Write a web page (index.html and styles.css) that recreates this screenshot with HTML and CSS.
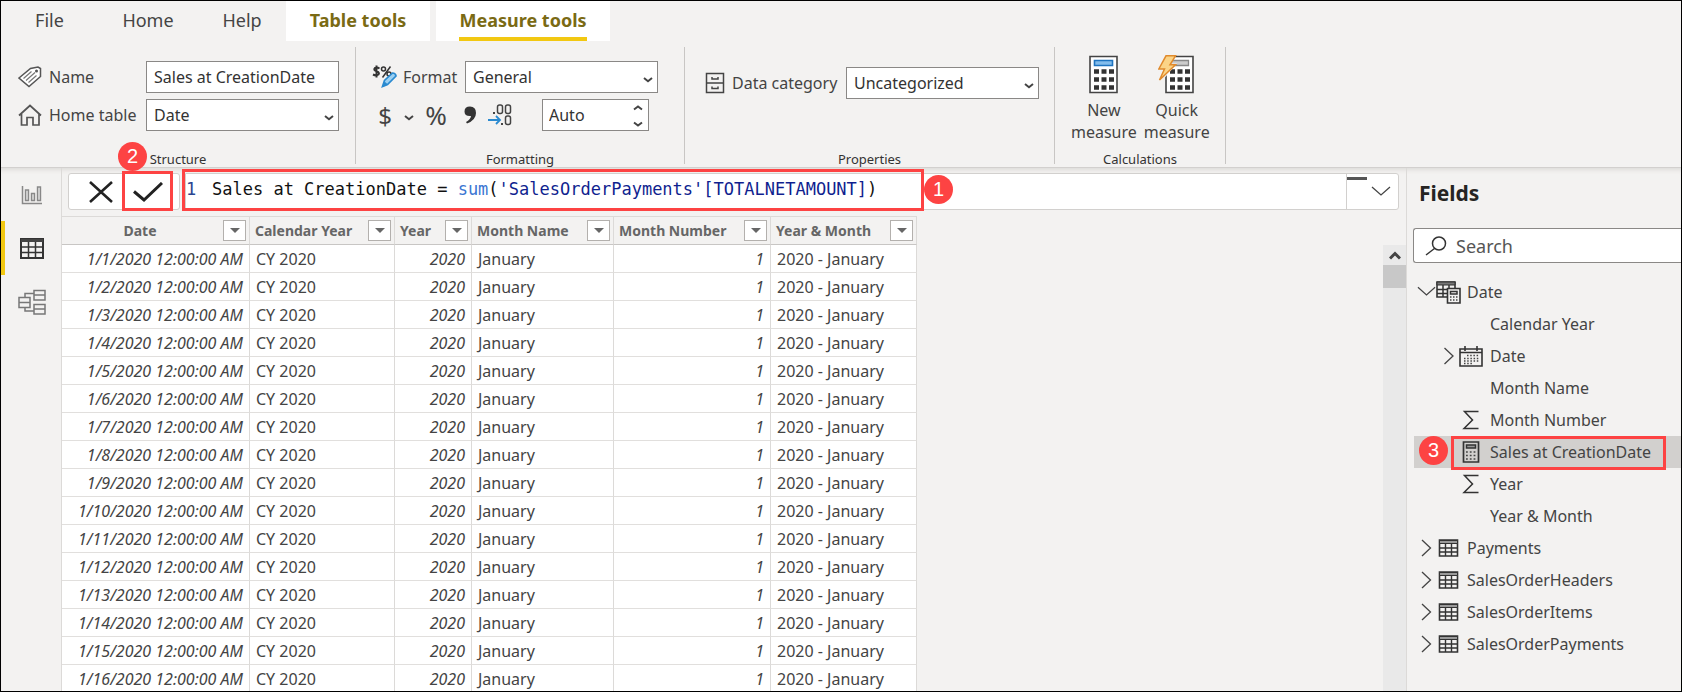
FILE: index.html
```html
<!DOCTYPE html>
<html lang="en">
<head>
<meta charset="utf-8">
<title>Measure tools</title>
<link rel="stylesheet" href="styles.css">
</head>
<body>
<svg class="defs" aria-hidden="true">
  <symbol id="chev" viewBox="0 0 10 6"><path d="M1 1l4 3.2L9 1" fill="none" stroke="#444" stroke-width="2"/></symbol>
  <symbol id="down" viewBox="0 0 20 12"><path d="M1 1l9 8 9-8" fill="none" stroke="#444" stroke-width="1.3"/></symbol>
  <symbol id="right" viewBox="0 0 12 18"><path d="M1.500 1l8.500 8-8.500 8" fill="none" stroke="#444" stroke-width="1.300"/></symbol>
  <symbol id="grid" viewBox="0 0 20 18"><path d="M1 1h18v16H1z" fill="none" stroke="#333" stroke-width="1.600"/><path d="M1 1.500h18v3H1z" fill="#999" stroke="#333"/><path d="M1 9h18M1 13h18M7 5v12M13 5v12" stroke="#333" stroke-width="1.400"/></symbol>
  <symbol id="sigma" viewBox="0 0 16 20"><path d="M15.500 1.500H1.500L9.500 10 1 18.500h14.500" fill="none" stroke="#333" stroke-width="1.500"/></symbol>
  <symbol id="tri" viewBox="0 0 10 6"><path d="M0 0h10L5 5z" fill="#666"/></symbol>
</svg>
<div class="app">
  <nav class="tabs">
    <button class="tab">File</button>
    <button class="tab">Home</button>
    <button class="tab">Help</button>
    <button class="tab tab-context">Table tools</button>
    <button class="tab tab-context tab-active"><span>Measure tools</span></button>
  </nav>

  <header class="ribbon">
    <section class="group group-structure">
      <div class="controls">
        <div class="row">
          <label class="label" for="name"><svg width="24" height="22" viewBox="0 0 24 22"><path d="M1 12L12.500 2.500 20 1l2.500 1.500v8L11 20.500z" fill="#fff" stroke="#555" stroke-width="1.500"/><circle cx="18.500" cy="5" r="1.500" fill="#555"/><path d="M5.500 12.500l8-7M8 14.500l9-8M10.500 16.500l8-7" stroke="#777" stroke-width="1.200"/></svg>Name</label>
          <input class="box" id="name" type="text" value="Sales at CreationDate">
        </div>
        <div class="row">
          <label class="label" for="home-table"><svg width="24" height="22" viewBox="0 0 24 22"><path d="M1 11.500L12 1.500l11 10M3.500 10v11H9v-7.500h6V21h6V10" fill="none" stroke="#555" stroke-width="1.700"/></svg>Home table</label>
          <span class="pick"><select class="box" id="home-table"><option>Date</option></select><svg class="arrow" width="10" height="6"><use href="#chev"/></svg></span>
        </div>
      </div>
      <h2 class="caption">Structure</h2>
    </section>
    <div class="divider"></div>

    <section class="group group-format">
      <div class="controls">
        <div class="row">
          <label class="label" for="format"><svg width="26" height="24" viewBox="0 0 26 24"><path d="M7.500 3.500Q5 2 3 3 1 5 4.500 6.200 8 7.500 6.500 9.500 4 11 1 9.500M4.500 0.500v12" fill="none" stroke="#333" stroke-width="2"/><circle cx="11.500" cy="4" r="2" fill="none" stroke="#333" stroke-width="1.500"/><circle cx="17" cy="9" r="2" fill="none" stroke="#333" stroke-width="1.500"/><path d="M18.500 1.500l-8 11" stroke="#333" stroke-width="1.500"/><path d="M10.500 21.500l2-6 8-7.500q3 0 3.500 3L15.500 19.500z" fill="#9cd0f2" stroke="#2a8ad0" stroke-width="1.700"/><path d="M10.500 22l2-5.500 3.500 3z" fill="#2a8ad0"/></svg>Format</label>
          <span class="pick"><select class="box" id="format"><option>General</option></select><svg class="arrow" width="10" height="6"><use href="#chev"/></svg></span>
        </div>
        <div class="row">
          <button class="fmt fmt-currency">$</button>
          <button class="fmt fmt-more" aria-label="Currency options"><svg width="10" height="6"><use href="#chev"/></svg></button>
          <button class="fmt fmt-percent">%</button>
          <button class="fmt fmt-comma" aria-label="Thousands separator"><svg width="12" height="18" viewBox="0 0 12 18"><path d="M6 0.500q6 0 6 6.500Q12 14 3 17.500L2 16q4.500-2.500 5-6Q0.500 10.500 0.500 5.500 0.500 0.500 6 0.500z" fill="#333"/></svg></button>
          <button class="fmt fmt-decimals" aria-label="Decimal places"><svg width="24" height="22" viewBox="0 0 24 22"><g fill="none" stroke="#444" stroke-width="1.500"><rect x="9.500" y="1" width="5" height="8.500" rx="2"/><rect x="17.500" y="1" width="5" height="8.500" rx="2"/><rect x="17.500" y="12" width="5" height="8.500" rx="2"/></g><path d="M5 8h2v2H5zM13 19h2v2h-2z" fill="#444"/><path d="M0 16h12M8 12l4 4-4 4" fill="none" stroke="#2a8ad0" stroke-width="1.800"/></svg></button>
          <span class="pick pick-auto"><input class="box" type="text" value="Auto" aria-label="Decimals"><svg class="spin" width="10" height="22" viewBox="0 0 10 22"><path d="M1 4.500L5 1.500l4 3M1 17.500l4 3 4-3" fill="none" stroke="#444" stroke-width="2"/></svg></span>
        </div>
      </div>
      <h2 class="caption">Formatting</h2>
    </section>
    <div class="divider"></div>

    <section class="group group-properties">
      <div class="controls">
        <div class="row">
          <label class="label" for="category"><svg width="20" height="22" viewBox="0 0 20 22"><path d="M1.500 1.500h17v19h-17zM1.500 11h17M7 5v2h6V5M7 14.500v2h6v-2" fill="none" stroke="#444" stroke-width="1.500"/></svg>Data category</label>
          <span class="pick"><select class="box" id="category"><option>Uncategorized</option></select><svg class="arrow" width="10" height="6"><use href="#chev"/></svg></span>
        </div>
      </div>
      <h2 class="caption">Properties</h2>
    </section>
    <div class="divider"></div>

    <section class="group group-calc">
      <div class="actions">
        <button class="big"><svg width="38" height="40" viewBox="0 0 38 40"><path d="M5 1.500h27v36H5z" fill="#fff" stroke="#444" stroke-width="1.600"/><path d="M9.500 5.500h18v5h-18z" fill="#83bdec" stroke="#1e74c0" stroke-width="1.600"/><path d="M9 16.500h20M9 24.500h20M9 32.500h20" stroke="#333" stroke-width="4.500" stroke-dasharray="5 2.500"/></svg><span>New</span><span>measure</span></button>
        <button class="big"><svg width="38" height="40" viewBox="0 0 38 40"><path d="M8 1.500h27v36H8z" fill="#fff" stroke="#444" stroke-width="1.600"/><path d="M12.500 5.500h18v5h-18z" fill="#ccc" stroke="#888" stroke-width="1.300"/><path d="M12 16.500h20M12 24.500h20M12 32.500h20" stroke="#333" stroke-width="4.500" stroke-dasharray="5 2.500"/><path d="M6-1h13l-6 9.500h6L3 27H0l5-12.500H0z" fill="#f3f2f1"/><path d="M8 0.800h9.500l-5.500 9H17.500L1.500 25l5-11H0.800z" fill="#fbd487" stroke="#e08a2c" stroke-width="1.500"/></svg><span>Quick</span><span>measure</span></button>
      </div>
      <h2 class="caption">Calculations</h2>
    </section>
    <div class="divider"></div>
  </header>

  <div class="workspace">
    <nav class="rail">
      <button class="view" aria-label="Report view"><svg width="22" height="20" viewBox="0 0 22 20"><path d="M1.500 1v17.500H21" fill="none" stroke="#888" stroke-width="1.500"/><path d="M4.500 5h3v10.500h-3zM10.500 8.500h3v7h-3zM16.500 2h3v13.500h-3z" fill="#ddd" stroke="#888" stroke-width="1.400"/></svg></button>
      <button class="view view-active" aria-label="Data view"><svg width="24" height="21" viewBox="0 0 24 21"><path d="M1 1h22v19H1z" fill="none" stroke="#333" stroke-width="2"/><path d="M1 1h22v3H1z" fill="#444"/><path d="M1 9h22M1 14.500h22M8.500 4v16M15.500 4v16" stroke="#333" stroke-width="1.500"/></svg></button>
      <button class="view" aria-label="Model view"><svg width="28" height="26" viewBox="0 0 28 26"><g fill="none" stroke="#777" stroke-width="1.500"><path d="M1 8.500h11v10H1zM1 13.500h11M16 1.500h11v9.500H16zM16 6h11M16 15.500h11V25H16zM16 20h11M7 8V4.500h9M7 19v3h9"/></g></svg></button>
    </nav>

    <main class="main">
      <div class="formula-bar">
        <div class="commit">
          <button class="commit-btn" aria-label="Cancel"><svg width="24" height="22" viewBox="0 0 24 22"><path d="M1 1l22 20M23 1L1 21" stroke="#222" stroke-width="2.600"/></svg></button>
          <button class="commit-btn" aria-label="Commit"><svg width="30" height="20" viewBox="0 0 30 20"><path d="M1 9.500l10 8.500L29 1" fill="none" stroke="#222" stroke-width="3"/></svg></button>
          <span class="mark mark-check"></span>
          <span class="badge badge-two">2</span>
        </div>
        <div class="formula">
          <span class="line-no">1</span>
          <code class="code" contenteditable="true" spellcheck="false" role="textbox" aria-label="Formula">Sales at CreationDate = <span class="fn">sum</span>(<span class="ref">'SalesOrderPayments'[TOTALNETAMOUNT]</span>)</code>
          <button class="expand" aria-label="Expand formula bar"><svg width="20" height="12"><use href="#down"/></svg></button>
          <span class="mark mark-formula"></span>
          <span class="badge badge-one">1</span>
        </div>
      </div>

      <div class="data">
        <table class="table">
          <colgroup><col class="c-date"><col class="c-cal"><col class="c-year"><col class="c-name"><col class="c-num"><col class="c-ym"></colgroup>
          <thead>
            <tr>
              <th><div class="th"><span class="mid">Date</span><button class="filter" aria-label="Filter Date"><svg width="10" height="6"><use href="#tri"/></svg></button></div></th>
              <th><div class="th"><span>Calendar Year</span><button class="filter" aria-label="Filter Calendar Year"><svg width="10" height="6"><use href="#tri"/></svg></button></div></th>
              <th><div class="th"><span>Year</span><button class="filter" aria-label="Filter Year"><svg width="10" height="6"><use href="#tri"/></svg></button></div></th>
              <th><div class="th"><span>Month Name</span><button class="filter" aria-label="Filter Month Name"><svg width="10" height="6"><use href="#tri"/></svg></button></div></th>
              <th><div class="th"><span>Month Number</span><button class="filter" aria-label="Filter Month Number"><svg width="10" height="6"><use href="#tri"/></svg></button></div></th>
              <th><div class="th"><span>Year &amp; Month</span><button class="filter" aria-label="Filter Year and Month"><svg width="10" height="6"><use href="#tri"/></svg></button></div></th>
            </tr>
          </thead>
          <tbody>
            <tr><td class="n">1/1/2020 12:00:00 AM</td><td>CY 2020</td><td class="n">2020</td><td>January</td><td class="n">1</td><td>2020 - January</td></tr>
            <tr><td class="n">1/2/2020 12:00:00 AM</td><td>CY 2020</td><td class="n">2020</td><td>January</td><td class="n">1</td><td>2020 - January</td></tr>
            <tr><td class="n">1/3/2020 12:00:00 AM</td><td>CY 2020</td><td class="n">2020</td><td>January</td><td class="n">1</td><td>2020 - January</td></tr>
            <tr><td class="n">1/4/2020 12:00:00 AM</td><td>CY 2020</td><td class="n">2020</td><td>January</td><td class="n">1</td><td>2020 - January</td></tr>
            <tr><td class="n">1/5/2020 12:00:00 AM</td><td>CY 2020</td><td class="n">2020</td><td>January</td><td class="n">1</td><td>2020 - January</td></tr>
            <tr><td class="n">1/6/2020 12:00:00 AM</td><td>CY 2020</td><td class="n">2020</td><td>January</td><td class="n">1</td><td>2020 - January</td></tr>
            <tr><td class="n">1/7/2020 12:00:00 AM</td><td>CY 2020</td><td class="n">2020</td><td>January</td><td class="n">1</td><td>2020 - January</td></tr>
            <tr><td class="n">1/8/2020 12:00:00 AM</td><td>CY 2020</td><td class="n">2020</td><td>January</td><td class="n">1</td><td>2020 - January</td></tr>
            <tr><td class="n">1/9/2020 12:00:00 AM</td><td>CY 2020</td><td class="n">2020</td><td>January</td><td class="n">1</td><td>2020 - January</td></tr>
            <tr><td class="n">1/10/2020 12:00:00 AM</td><td>CY 2020</td><td class="n">2020</td><td>January</td><td class="n">1</td><td>2020 - January</td></tr>
            <tr><td class="n">1/11/2020 12:00:00 AM</td><td>CY 2020</td><td class="n">2020</td><td>January</td><td class="n">1</td><td>2020 - January</td></tr>
            <tr><td class="n">1/12/2020 12:00:00 AM</td><td>CY 2020</td><td class="n">2020</td><td>January</td><td class="n">1</td><td>2020 - January</td></tr>
            <tr><td class="n">1/13/2020 12:00:00 AM</td><td>CY 2020</td><td class="n">2020</td><td>January</td><td class="n">1</td><td>2020 - January</td></tr>
            <tr><td class="n">1/14/2020 12:00:00 AM</td><td>CY 2020</td><td class="n">2020</td><td>January</td><td class="n">1</td><td>2020 - January</td></tr>
            <tr><td class="n">1/15/2020 12:00:00 AM</td><td>CY 2020</td><td class="n">2020</td><td>January</td><td class="n">1</td><td>2020 - January</td></tr>
            <tr><td class="n">1/16/2020 12:00:00 AM</td><td>CY 2020</td><td class="n">2020</td><td>January</td><td class="n">1</td><td>2020 - January</td></tr>
          </tbody>
        </table>
        <div class="scrollbar"><button class="scroll-up" aria-label="Scroll up"><svg width="12" height="9" viewBox="0 0 12 9"><path d="M1 7.500l5-5 5 5" fill="none" stroke="#444" stroke-width="3"/></svg></button><div class="thumb"></div></div>
      </div>
    </main>

    <aside class="fields">
      <h1 class="title">Fields</h1>
      <label class="search"><svg width="22" height="20" viewBox="0 0 22 20"><circle cx="14" cy="7.500" r="6.500" fill="none" stroke="#333" stroke-width="1.500"/><path d="M9.500 12.500L1 19" stroke="#333" stroke-width="1.500"/></svg><input type="search" placeholder="Search" aria-label="Search"></label>
      <ul class="tree">
        <li class="item"><svg class="toggle" width="19" height="12"><use href="#down"/></svg><svg class="table-icon" width="25" height="23" viewBox="0 0 25 23"><path d="M1 1h18v15H1z" fill="none" stroke="#333" stroke-width="1.600"/><path d="M1 1h18v3H1z" fill="#777" stroke="#333"/><path d="M1 8.500h18M1 12.500h12M7 4v12M13 4v12" stroke="#333" stroke-width="1.500"/><path d="M11.500 7.500h12.500V22H11.500z" fill="#f3f2f1" stroke="#333" stroke-width="1.600"/><path d="M14.500 10.500h6.500v2.500h-6.500z" fill="none" stroke="#333" stroke-width="1.500"/><path d="M14 16h8M14 19h8" stroke="#444" stroke-width="1.500" stroke-dasharray="1.500 1.500"/></svg>Date</li>
        <li class="item child"><span class="icon"></span>Calendar Year</li>
        <li class="item child"><svg class="branch" width="12" height="18"><use href="#right"/></svg><svg class="icon" width="24" height="21" viewBox="0 0 24 21"><path d="M1 3h22v17H1zM1 6.500h22M6 0v5M18 0v5" fill="none" stroke="#333" stroke-width="1.600"/><path d="M8 9.500h12M5 12.500h15M5 15h15M5 17.500h9" stroke="#444" stroke-width="1.400" stroke-dasharray="1.500 1.700"/></svg>Date</li>
        <li class="item child"><span class="icon"></span>Month Name</li>
        <li class="item child"><svg class="icon" width="16" height="20"><use href="#sigma"/></svg>Month Number</li>
        <li class="item child item-selected"><svg class="icon" width="18" height="22" viewBox="0 0 18 22"><path d="M1.500 1h15v20h-15z" fill="none" stroke="#333" stroke-width="1.700"/><path d="M4.500 4h9v3h-9z" fill="#999" stroke="#333" stroke-width="1.500"/><path d="M4 11h11M4 14.500h11M4 18h11" stroke="#444" stroke-width="1.600" stroke-dasharray="1.800 2"/></svg>Sales at CreationDate<span class="mark mark-field"></span><span class="badge badge-three">3</span></li>
        <li class="item child"><svg class="icon" width="16" height="20"><use href="#sigma"/></svg>Year</li>
        <li class="item child"><span class="icon"></span>Year &amp; Month</li>
        <li class="item"><svg class="toggle" width="12" height="18"><use href="#right"/></svg><svg class="table-icon" width="20" height="18"><use href="#grid"/></svg>Payments</li>
        <li class="item"><svg class="toggle" width="12" height="18"><use href="#right"/></svg><svg class="table-icon" width="20" height="18"><use href="#grid"/></svg>SalesOrderHeaders</li>
        <li class="item"><svg class="toggle" width="12" height="18"><use href="#right"/></svg><svg class="table-icon" width="20" height="18"><use href="#grid"/></svg>SalesOrderItems</li>
        <li class="item"><svg class="toggle" width="12" height="18"><use href="#right"/></svg><svg class="table-icon" width="20" height="18"><use href="#grid"/></svg>SalesOrderPayments</li>
      </ul>
    </aside>
  </div>
</div>
</body>
</html>
```
FILE: styles.css
```css
* { box-sizing: border-box; }
body, h1, h2, ul { margin: 0; padding: 0; }
body, button, input, select { font-family: "Noto Sans", "Open Sans", sans-serif; font-size: 16px; color: #444; }
button { border: 0; padding: 0; background: none; }
svg { flex: none; }
.defs { position: absolute; width: 0; height: 0; }

.app { display: flex; flex-direction: column; height: 100vh; border: 1px solid #000; overflow: hidden; background: #f3f2f1; }

/* Tabs */
.tabs { display: grid; grid-template-columns: 97px 100px 88px 144px 174px; height: 40px; }
.tab { font-size: 18px; line-height: 36px; padding-bottom: 2px; }
.tab-context { background: #fff; color: #7a6a14; font-weight: 700; }
.tab-active { margin-left: 6px; margin-right: -6px; padding: 0; }
.tab-active span { display: inline-block; height: 39px; border-bottom: 4px solid #f2c811; }

/* Ribbon */
.ribbon { display: flex; height: 126px; flex: none; padding-top: 6px; }
.group { display: flex; flex-direction: column; justify-content: space-between; }
.group-structure { width: 354px; }
.group-format { width: 328px; }
.group-properties { width: 369px; }
.group-calc { width: 170px; }
.divider { width: 1px; margin-bottom: 3px; background: #c8c6c4; }
.caption { font-size: 13px; font-weight: 400; line-height: 16px; text-align: center; color: #333; }
.controls { display: flex; flex-direction: column; gap: 6px; padding: 14px 0 0 17px; }
.group-format .controls { padding-left: 16px; }
.group-properties .controls { padding: 20px 0 0 20px; }
.row { display: flex; align-items: center; height: 32px; }
.label { display: flex; align-items: center; gap: 7px; white-space: nowrap; }
.group-structure .label { width: 128px; }
.group-format .label { width: 93px; gap: 5px; }
.group-properties .label { width: 141px; }
.box { width: 193px; height: 32px; padding: 0 7px; border: 1px solid #8a8886; border-radius: 0; background: #fff; color: #333; appearance: none; outline: 0; }
.pick { position: relative; display: flex; }
.arrow { position: absolute; right: 5px; top: 16px; }
.pick-auto { margin-left: 30px; }
.pick-auto .box { width: 107px; padding: 0 6px; }
.spin { position: absolute; right: 6px; top: 6px; }
.fmt { display: flex; align-items: center; justify-content: center; height: 32px; font-size: 24px; }
.fmt-currency { width: 26px; }
.fmt-more { width: 22px; padding-top: 5px; }
.fmt-percent { width: 32px; font-size: 26px; }
.fmt-comma { width: 36px; }
.fmt-decimals { width: 24px; }
.actions { display: flex; gap: 7px; padding: 8px 0 0 16px; }
.big { display: flex; flex-direction: column; align-items: center; line-height: 22px; }
.big svg { margin-bottom: 4px; }

/* Workspace */
.workspace { display: flex; flex: 1; min-height: 0; border-top: 1px solid #d2d0ce; box-shadow: inset 0 5px 4px -3px #dddbd9; }
.rail { width: 60px; flex: none; display: flex; flex-direction: column; }
.view { display: flex; align-items: center; justify-content: center; height: 54px; padding-right: 2px; border-left: 4px solid transparent; }
.view-active { border-left-color: #f2c811; }
.rail .view:first-child { height: 53px; }
.main { display: flex; flex-direction: column; flex: 1; min-width: 0; border-left: 1px solid #dcdad8; }
.formula-bar { display: flex; gap: 5px; margin: 5px 7px 6px 6px; height: 37px; flex: none; }
.commit { position: relative; display: flex; width: 112px; padding: 0 8px; border: 1px solid #d2d0ce; border-radius: 3px; background: #fff; }
.commit-btn { flex: 1; display: flex; align-items: center; justify-content: center; }
.formula { position: relative; display: flex; flex: 1; min-width: 0; border: 1px solid #d2d0ce; background: #fff; font: 17px/30px "DejaVu Sans Mono", monospace; color: #111; border-radius: 0 3px 3px 0; }
.line-no { width: 26px; color: #2b4590; }
.code { flex: 1; font: inherit; white-space: pre; outline: 0; }
.fn { color: #3a76d2; }
.ref { color: #101f8f; }
.expand { width: 52px; border-left: 1px solid #d2d0ce; background: linear-gradient(#555, #555) 0 3px / 20px 3px no-repeat; padding-left: 16px; }
.expand svg { display: block; margin: auto; }
.mark { position: absolute; border: 3px solid #fd4343; pointer-events: none; }
.mark-check { left: 53px; top: -3px; width: 51px; height: 40px; }
.mark-formula { left: -4px; top: -5px; width: 742px; height: 42px; }
.badge { position: absolute; width: 29px; height: 29px; border-radius: 50%; background: #fd4343; color: #fff; font: 20px/29px "Liberation Sans", Arial, sans-serif; text-align: center; }
.badge-one { left: 738px; top: 1px; }
.badge-two { left: 49px; top: -32px; }

/* Data grid */
.data { display: flex; justify-content: space-between; flex: 1; min-height: 0; }
.table { width: 855px; height: max-content; table-layout: fixed; border-spacing: 0; border-top: 1px solid #dcdad8; line-height: 20px; }
.c-date { width: 188px; }
.c-cal { width: 145px; }
.c-year { width: 77px; }
.c-name { width: 142px; }
.c-num { width: 157px; }
.c-ym { width: 146px; }
.table th, .table td { height: 28px; padding: 0 6px; border-right: 1px solid #dcdad8; border-bottom: 1px solid #e1dfdd; white-space: nowrap; }
.table th { padding: 0 3px 0 5px; border-bottom-color: #c8c6c4; font-size: 14px; color: #666; }
.table td { background: #fff; }
.table .n { text-align: right; font-style: italic; }
.th { display: flex; align-items: center; justify-content: space-between; }
.mid { flex: 1; padding-right: 10px; }
.filter { display: flex; align-items: center; justify-content: center; width: 23px; height: 21px; border: 1px solid #b3b0ad; background: #fff; }
.scrollbar { width: 23px; margin-top: 29px; background: #e9e9e9; }
.scroll-up { display: flex; align-items: center; justify-content: center; width: 100%; height: 20px; }
.thumb { height: 23px; background: #c8c8c8; }

/* Fields pane */
.fields { width: 275px; flex: none; border-left: 1px solid #dcdad8; }
.title { margin: 10px 0 20px 12px; font-size: 21px; line-height: 30px; color: #252423; }
.search { display: flex; align-items: center; gap: 9px; height: 35px; margin-left: 6px; padding-left: 11px; border: 1px solid #8a8886; border-right: 0; border-radius: 3px 0 0 3px; background: #fff; }
.search input { flex: 1; min-width: 0; border: 0; padding: 0; outline: 0; background: none; font-size: 18px; }
.search input::placeholder { color: #555; }
.tree { list-style: none; margin: 13px 0 0 7px; }
.item { position: relative; display: flex; align-items: center; height: 32px; white-space: nowrap; }
.toggle { width: 19px; margin-left: 3px; }
.table-icon { width: 25px; margin-right: 6px; }
.child { padding-left: 45px; }
.icon { width: 24px; margin-right: 7px; }
.branch { position: absolute; left: 29px; }
.item-selected { background: #d2d0ce; }
.mark-field { left: 37px; top: 0; width: 215px; height: 34px; }
.badge-three { left: 5px; top: 0; }
```
